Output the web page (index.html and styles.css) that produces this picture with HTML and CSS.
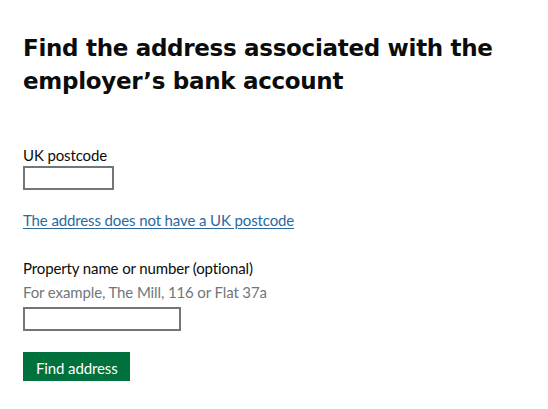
FILE: index.html
```html
<!DOCTYPE html>
<html lang="en">
<head>
<meta charset="utf-8">
<title>Find the address</title>
<link rel="stylesheet" href="styles.css">
</head>
<body>
<main class="page">
  <h1 class="heading">Find the address associated with the employer’s bank account</h1>
  <form class="form">
    <div class="group group-postcode">
      <label class="label" for="postcode">UK postcode</label>
      <input class="input input-postcode" id="postcode" type="text">
    </div>
    <p class="link-row"><a class="link" href="#">The address does not have a UK postcode</a></p>
    <div class="group group-property">
      <label class="label" for="property">Property name or number (optional)</label>
      <div class="hint">For example, The Mill, 116 or Flat 37a</div>
      <input class="input input-property" id="property" type="text">
    </div>
    <button class="button" type="button">Find address</button>
  </form>
</main>
</body>
</html>
```
FILE: styles.css
```css
html, body {
  margin: 0;
  padding: 0;
  background: #ffffff;
}
body {
  font-family: Lato, "Liberation Sans", Arial, sans-serif;
  color: #0b0c0c;
  letter-spacing: -0.12px;
}
.page {
  padding: 32px 0 0 23px;
}
.heading {
  margin: 0;
  font-family: "DejaVu Sans", "Liberation Sans", sans-serif;
  font-size: 23px;
  line-height: 33px;
  font-weight: 700;
  letter-spacing: -0.3px;
  width: 500px;
}
.form {
  display: flex;
  flex-direction: column;
  align-items: flex-start;
  margin-top: 47px;
}
.group {
  display: flex;
  flex-direction: column;
  align-items: flex-start;
}
.label {
  font-size: 15px;
  line-height: 20px;
  display: block;
}
.group-postcode .label {
  margin-bottom: 1px;
}
.input {
  box-sizing: border-box;
  height: 24px;
  border: 2px solid #6f777b;
  margin: 0;
  padding: 2px 4px;
  background: #fff;
  font: inherit;
}
.input-postcode {
  width: 91px;
}
.input-property {
  width: 158px;
}
.link-row {
  margin: 20px 0 0 0;
  font-size: 15px;
  line-height: 20px;
}
.link {
  color: #2b6a9e;
  text-decoration: underline;
  text-underline-offset: 2px;
}
.group-property {
  margin-top: 28px;
}
.hint {
  margin-top: 4px;
  font-size: 15px;
  line-height: 20px;
  color: #6f777b;
  margin-bottom: 5px;
}
.button {
  margin-top: 21px;
  font: inherit;
  font-size: 15px;
  line-height: 19px;
  letter-spacing: -0.12px;
  color: #ffffff;
  background: #00703c;
  border: 0;
  border-radius: 0;
  padding: 7px 12px 3px 13px;
  height: 29px;
  box-shadow: 0 2px 0 #002d18;
}
```
